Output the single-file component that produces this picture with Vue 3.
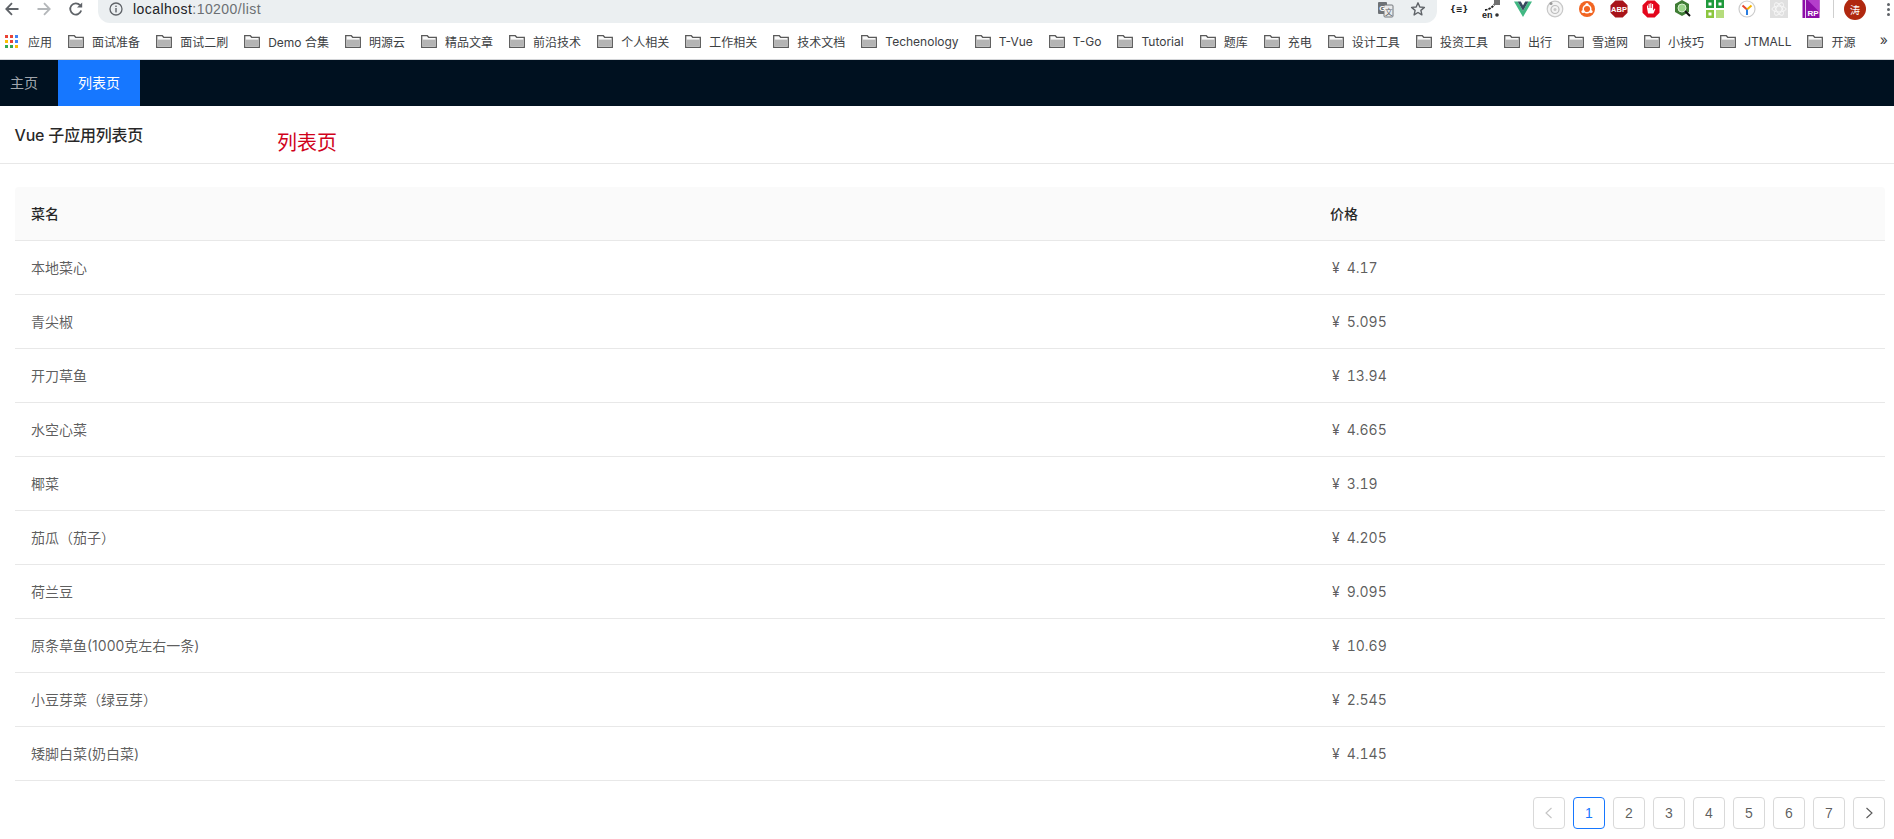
<script setup>
const folders = ['面试准备','面试二刷','Demo 合集','明源云','精品文章','前沿技术','个人相关','工作相关','技术文档','Techenology','T-Vue','T-Go','Tutorial','题库','充电','设计工具','投资工具','出行','雪道网','小技巧','JTMALL','开源']
const rows = [
  ['本地菜心','4.17'],['青尖椒','5.095'],['开刀草鱼','13.94'],['水空心菜','4.665'],['椰菜','3.19'],
  ['茄瓜（茄子）','4.205'],['荷兰豆','9.095'],['原条草鱼(1000克左右一条)','10.69'],['小豆芽菜（绿豆芽）','2.545'],['矮脚白菜(奶白菜)','4.145']
]
const pages = [1,2,3,4,5,6,7]
const appColors = ['#ea4335','#ea4335','#4285f4','#fbbc05','#ea4335','#4285f4','#34a853','#34a853','#fbbc05']
</script>

<template>
  <div class="page">
    <div class="toolbar">
      <div class="nav-btns">
        <svg class="navicon" width="16" height="16" viewBox="0 0 16 16"><path d="M14.5 8H2.5M8 2.2 2.3 8 8 13.8" fill="none" stroke="#5f6368" stroke-width="1.8"/></svg>
        <svg class="navicon" width="16" height="16" viewBox="0 0 16 16"><path d="M1.5 8h12M8 2.2 13.7 8 8 13.8" fill="none" stroke="#b4b7ba" stroke-width="1.8"/></svg>
        <svg class="navicon" width="16" height="16" viewBox="0 0 16 16"><path d="M13.2 9.6A5.6 5.6 0 1 1 12 4.2" fill="none" stroke="#5f6368" stroke-width="1.8"/><path d="M14.2 1.4v5.2H9z" fill="#5f6368"/></svg>
      </div>
      <div class="omnibox">
        <svg width="14" height="14" viewBox="0 0 14 14"><circle cx="7" cy="7" r="6" fill="none" stroke="#5f6368" stroke-width="1.3"/><rect x="6.3" y="6" width="1.4" height="4.4" fill="#5f6368"/><rect x="6.3" y="3.6" width="1.4" height="1.4" fill="#5f6368"/></svg>
        <span class="url"><b>localhost</b>:10200/list</span>
        <span class="omni-space"></span>
        <svg width="17" height="17" viewBox="0 0 17 17"><rect x="1" y="1" width="9" height="12" rx="1" fill="#6e7276"/><rect x="7" y="4" width="9" height="12" rx="1" fill="#e8eaec" stroke="#74787c"/><text x="2.2" y="9.500" font-size="8" fill="#fff" font-family="Liberation Sans" font-weight="700">G</text><text x="8" y="13.500" font-size="7.500" fill="#5f6368" font-family="Noto Sans CJK SC">文</text></svg>
        <svg class="star" width="16" height="16" viewBox="0 0 16 16"><path d="M8 1.800 9.800 6l4.600.4-3.500 3 1 4.500L8 11.500l-3.900 2.400 1-4.500-3.500-3L6.200 6z" fill="none" stroke="#5f6368" stroke-width="1.400" stroke-linejoin="round"/></svg>
      </div>
      <div class="extensions">
        <span class="ext json">{≡}</span>
        <svg class="ext" width="18" height="18" viewBox="0 0 18 18"><path d="M3 10C7 9.500 10 8 13.500 3" fill="none" stroke="#222" stroke-width="1.800" stroke-dasharray="2.500 1"/><rect x="12" y="0" width="6" height="5" fill="#6f6f6f"/><text x="0" y="17.500" font-size="9" font-weight="700" fill="#222" font-family="Liberation Sans">en</text><circle cx="15" cy="15" r="1.800" fill="#333"/></svg>
        <svg class="ext" width="18" height="16" viewBox="0 0 18 16"><path d="M0 .5h3.600L9 9.800 14.400.5H18L9 16z" fill="#41b883"/><path d="M3.600.5H6.800L9 4.400 11.200.5h3.200L9 9.800z" fill="#35495e"/></svg>
        <svg class="ext" width="18" height="18" viewBox="0 0 18 18"><circle cx="9" cy="9" r="7.800" fill="#f4f4f4" stroke="#c8c8c8" stroke-width="1.200"/><circle cx="9" cy="9.500" r="4" fill="none" stroke="#bdbdbd" stroke-width="1.200"/><circle cx="9" cy="9.500" r="1.500" fill="#c8c8c8"/><circle cx="5" cy="3.500" r="1.500" fill="#999"/></svg>
        <svg class="ext" width="18" height="18" viewBox="0 0 18 18"><circle cx="9" cy="9" r="8" fill="#f26522"/><circle cx="9" cy="9" r="3.800" fill="none" stroke="#fff" stroke-width="1.500"/><circle cx="9" cy="4.500" r="1.600" fill="#fff"/><circle cx="5" cy="11.500" r="1.600" fill="#fff"/><circle cx="13" cy="11.500" r="1.600" fill="#fff"/></svg>
        <svg class="ext" width="18" height="18" viewBox="0 0 18 18"><path d="M5.300.5h7.400l4.800 4.800v7.400l-4.800 4.800H5.300L.5 12.700V5.300z" fill="#a8141a"/><text x="9" y="12" text-anchor="middle" font-size="7.500" font-weight="700" fill="#fff" font-family="Liberation Sans">ABP</text></svg>
        <svg class="ext" width="18" height="18" viewBox="0 0 18 18"><path d="M5.300.5h7.400l4.800 4.800v7.400l-4.800 4.800H5.300L.5 12.700V5.300z" fill="#e4061c"/><path d="M6 13.500 5 8V5.500h1V8h.6V3.800h1.100V8h.6V3.200h1.100V8h.6V4h1.100v6.500l1.500-2 .8.500-2 4.500z" fill="#fff"/></svg>
        <svg class="ext" width="18" height="18" viewBox="0 0 18 18"><path d="M8 0 15 4v8l-7 4-7-4V4z" fill="#3f7d35"/><circle cx="8" cy="8" r="4" fill="#9ad48a" stroke="#d8f0d0"/><path d="M11 11l5 5" stroke="#111" stroke-width="2"/></svg>
        <svg class="ext" width="18" height="18" viewBox="0 0 18 18"><rect x="0" y="0" width="8" height="8" fill="#1f9a3c"/><rect x="2.500" y="2.500" width="3" height="3" fill="#fff"/><rect x="10" y="0" width="8" height="8" fill="#1f9a3c"/><rect x="12.500" y="2.500" width="3" height="3" fill="#fff"/><rect x="0" y="10" width="8" height="8" fill="#8cc63f"/><rect x="2.500" y="12.500" width="3" height="3" fill="#fff"/><rect x="10" y="10" width="8" height="8" fill="#b5dc7c"/></svg>
        <svg class="ext" width="18" height="18" viewBox="0 0 18 18"><circle cx="9" cy="9" r="8" fill="#fff" stroke="#ccc" stroke-width="1.200"/><path d="M4.500 5.500 9 9.500" stroke="#e8452c" stroke-width="2"/><path d="M13.500 5.500 9 9.500" stroke="#f5b400" stroke-width="2"/><path d="M9 9.500V15" stroke="#2a7de1" stroke-width="2"/></svg>
        <svg class="ext" width="18" height="18" viewBox="0 0 18 18"><rect width="18" height="18" fill="#e0e0e0"/><g fill="none" stroke="#f6f6f6" stroke-width="1"><ellipse cx="9" cy="9" rx="7" ry="3"/><ellipse cx="9" cy="9" rx="7" ry="3" transform="rotate(60 9 9)"/><ellipse cx="9" cy="9" rx="7" ry="3" transform="rotate(120 9 9)"/></g></svg>
        <svg class="ext" width="17" height="18" viewBox="0 0 17 18"><rect width="17" height="18" fill="#8d0da8"/><rect x="2.500" width="1" height="18" fill="#e9c6f0"/><path d="M5 0h12v12z" fill="#b43ecb"/><text x="5" y="15.500" font-size="8" font-weight="700" fill="#fff" font-family="Liberation Sans">RP</text></svg>
        <span class="divider"></span>
        <span class="avatar">涛</span>
        <span class="dots"><i></i><i></i><i></i></span>
      </div>
    </div>

    <div class="bookmarks">
      <span class="bm bm-apps">
        <span class="apps"><i v-for="(c, i) in appColors" :key="i" :style="{ background: c }"></i></span>
        <span>应用</span>
      </span>
      <span v-for="name in folders" :key="name" class="bm">
        <svg width="16" height="13" viewBox="0 0 16 13"><path d="M.7.7h5.600l1.400 1.600h7.600v10H.7z" fill="#fafafa" stroke="#5a5a5a" stroke-width="1.300"/><rect x="1.400" y="4.600" width="13.200" height="7" fill="#b4b4b4"/></svg>
        <span>{{ name }}</span>
      </span>
      <span class="more">»</span>
    </div>

    <nav class="appnav">
      <a class="tab first">主页</a>
      <a class="tab active">列表页</a>
    </nav>

    <header class="subhead">
      <h1>Vue 子应用列表页</h1>
      <span class="redtitle">列表页</span>
    </header>

    <main class="content">
      <table>
        <colgroup><col class="c1"><col></colgroup>
        <thead><tr><th>菜名</th><th>价格</th></tr></thead>
        <tbody>
          <tr v-for="r in rows" :key="r[0]">
            <td>{{ r[0] }}</td>
            <td class="price"><span class="yen">¥</span>{{ r[1] }}</td>
          </tr>
        </tbody>
      </table>
      <div class="pager">
        <span class="pg disabled"><svg width="12" height="12" viewBox="0 0 12 12"><path d="M8.500 1 3 6l5.500 5" fill="none" stroke="#c4c4c4" stroke-width="1.100"/></svg></span>
        <span v-for="p in pages" :key="p" class="pg" :class="{ on: p === 1 }">{{ p }}</span>
        <span class="pg"><svg width="12" height="12" viewBox="0 0 12 12"><path d="M3.500 1 9 6l-5.500 5" fill="none" stroke="#595959" stroke-width="1.100"/></svg></span>
      </div>
    </main>
  </div>
</template>

<style scoped>
.page {
  width: 1894px;
  height: 839px;
  overflow: hidden;
  background: #fff;
  font-family: Inter, "Noto Sans CJK SC", sans-serif;
  font-size: 14px;
  color: rgba(0, 0, 0, 0.65);
}
.toolbar {
  display: flex;
  height: 23px;
  align-items: flex-start;
}
.nav-btns {
  display: flex;
  gap: 16px;
  width: 98px;
  padding: 1px 0 0 4px;
  box-sizing: border-box;
  flex: none;
}
.omnibox {
  width: 1339px;
  flex: none;
  height: 23px;
  box-sizing: border-box;
  background: #ebeff1;
  border-radius: 0 0 12px 12px;
  display: flex;
  align-items: center;
  padding: 0 11px 5px 11px;
}
.url {
  margin-left: 10px;
  font-size: 14px;
  font-family: "Liberation Sans", sans-serif;
  letter-spacing: 0.45px;
  color: #6b6f73;
}
.url b {
  font-weight: 400;
  color: #202124;
}
.omni-space { flex: 1; }
.star { margin-left: 16px; }
.extensions {
  flex: 1;
  display: flex;
  align-items: center;
  height: 18px;
  padding-left: 13px;
}
.ext {
  width: 18px;
  flex: none;
  margin-right: 14px;
  text-align: center;
}
.json {
  font-size: 8px;
  font-weight: 700;
  color: #222;
  font-family: "DejaVu Sans", sans-serif;
  white-space: nowrap;
}
.divider {
  width: 1px;
  height: 18px;
  background: #cfcfcf;
  margin: 0 10px 0 -1px;
}
.avatar {
  width: 22px;
  height: 22px;
  border-radius: 50%;
  background: #b0280f;
  color: #fff;
  font-size: 10px;
  display: flex;
  align-items: center;
  justify-content: center;
  flex: none;
}
.dots {
  margin-left: 21px;
  display: flex;
  flex-direction: column;
  gap: 2px;
}
.dots i {
  width: 3px;
  height: 3px;
  border-radius: 50%;
  background: #5f6368;
}
.bookmarks {
  height: 37px;
  box-sizing: border-box;
  border-bottom: 1px solid #d3d5d8;
  display: flex;
  align-items: center;
  padding-left: 5px;
  gap: 16.05px;
  font-size: 12px;
  color: #3c4043;
  white-space: nowrap;
  position: relative;
}
.bm {
  display: flex;
  align-items: center;
  gap: 8px;
  flex: none;
}
.bm-apps { gap: 10px; }
.apps {
  display: grid;
  grid-template-columns: repeat(3, 3px);
  grid-auto-rows: 3px;
  gap: 2px;
}
.more {
  position: absolute;
  right: 6px;
  top: 8px;
  font-size: 14px;
}
.appnav {
  height: 46px;
  background: #001120;
  display: flex;
}
.tab {
  padding: 0 20px;
  line-height: 46px;
  color: rgba(255, 255, 255, 0.65);
}
.tab.first { padding-left: 10px; }
.tab.active {
  background: #1677ff;
  color: #fff;
}
.subhead {
  height: 58px;
  box-sizing: border-box;
  border-bottom: 1px solid #e8e8e8;
  padding: 17px 15px 0 14.500px;
  display: flex;
  align-items: flex-start;
}
.subhead h1 {
  margin: 0;
  width: 262.500px;
  font-size: 16px;
  line-height: 24px;
  font-weight: 500;
  letter-spacing: -0.2px;
  color: rgba(0, 0, 0, 0.85);
}
.redtitle {
  font-size: 20px;
  line-height: 28px;
  color: #d0021b;
  margin-top: 6px;
}
.content {
  padding: 23px 9px 0 15px;
}
table {
  width: 1870px;
  table-layout: fixed;
  border-collapse: separate;
  border-spacing: 0;
}
.c1 { width: 1300px; }
th, td {
  padding: 16px;
  line-height: 21px;
  border-bottom: 1px solid #e8e8e8;
  text-align: left;
  font-size: 14px;
}
th {
  background: #fafafa;
  color: rgba(0, 0, 0, 0.85);
  font-weight: 500;
}
th:first-child { border-top-left-radius: 4px; }
th:last-child { border-top-right-radius: 4px; padding-left: 15px; }
.price { font-variant-numeric: tabular-nums; }
.yen { margin: 0 7px 0 1px; }
.pager {
  display: flex;
  justify-content: flex-end;
  gap: 8px;
  margin-top: 16px;
}
.pg {
  width: 32px;
  height: 32px;
  box-sizing: border-box;
  border: 1px solid #d9d9d9;
  border-radius: 4px;
  display: flex;
  align-items: center;
  justify-content: center;
  color: rgba(0, 0, 0, 0.65);
  font-family: "Liberation Sans", sans-serif;
}
.pg.on {
  border-color: #1677ff;
  color: #1677ff;
}
</style>

<style>
html, body { margin: 0; overflow: hidden; }
</style>
